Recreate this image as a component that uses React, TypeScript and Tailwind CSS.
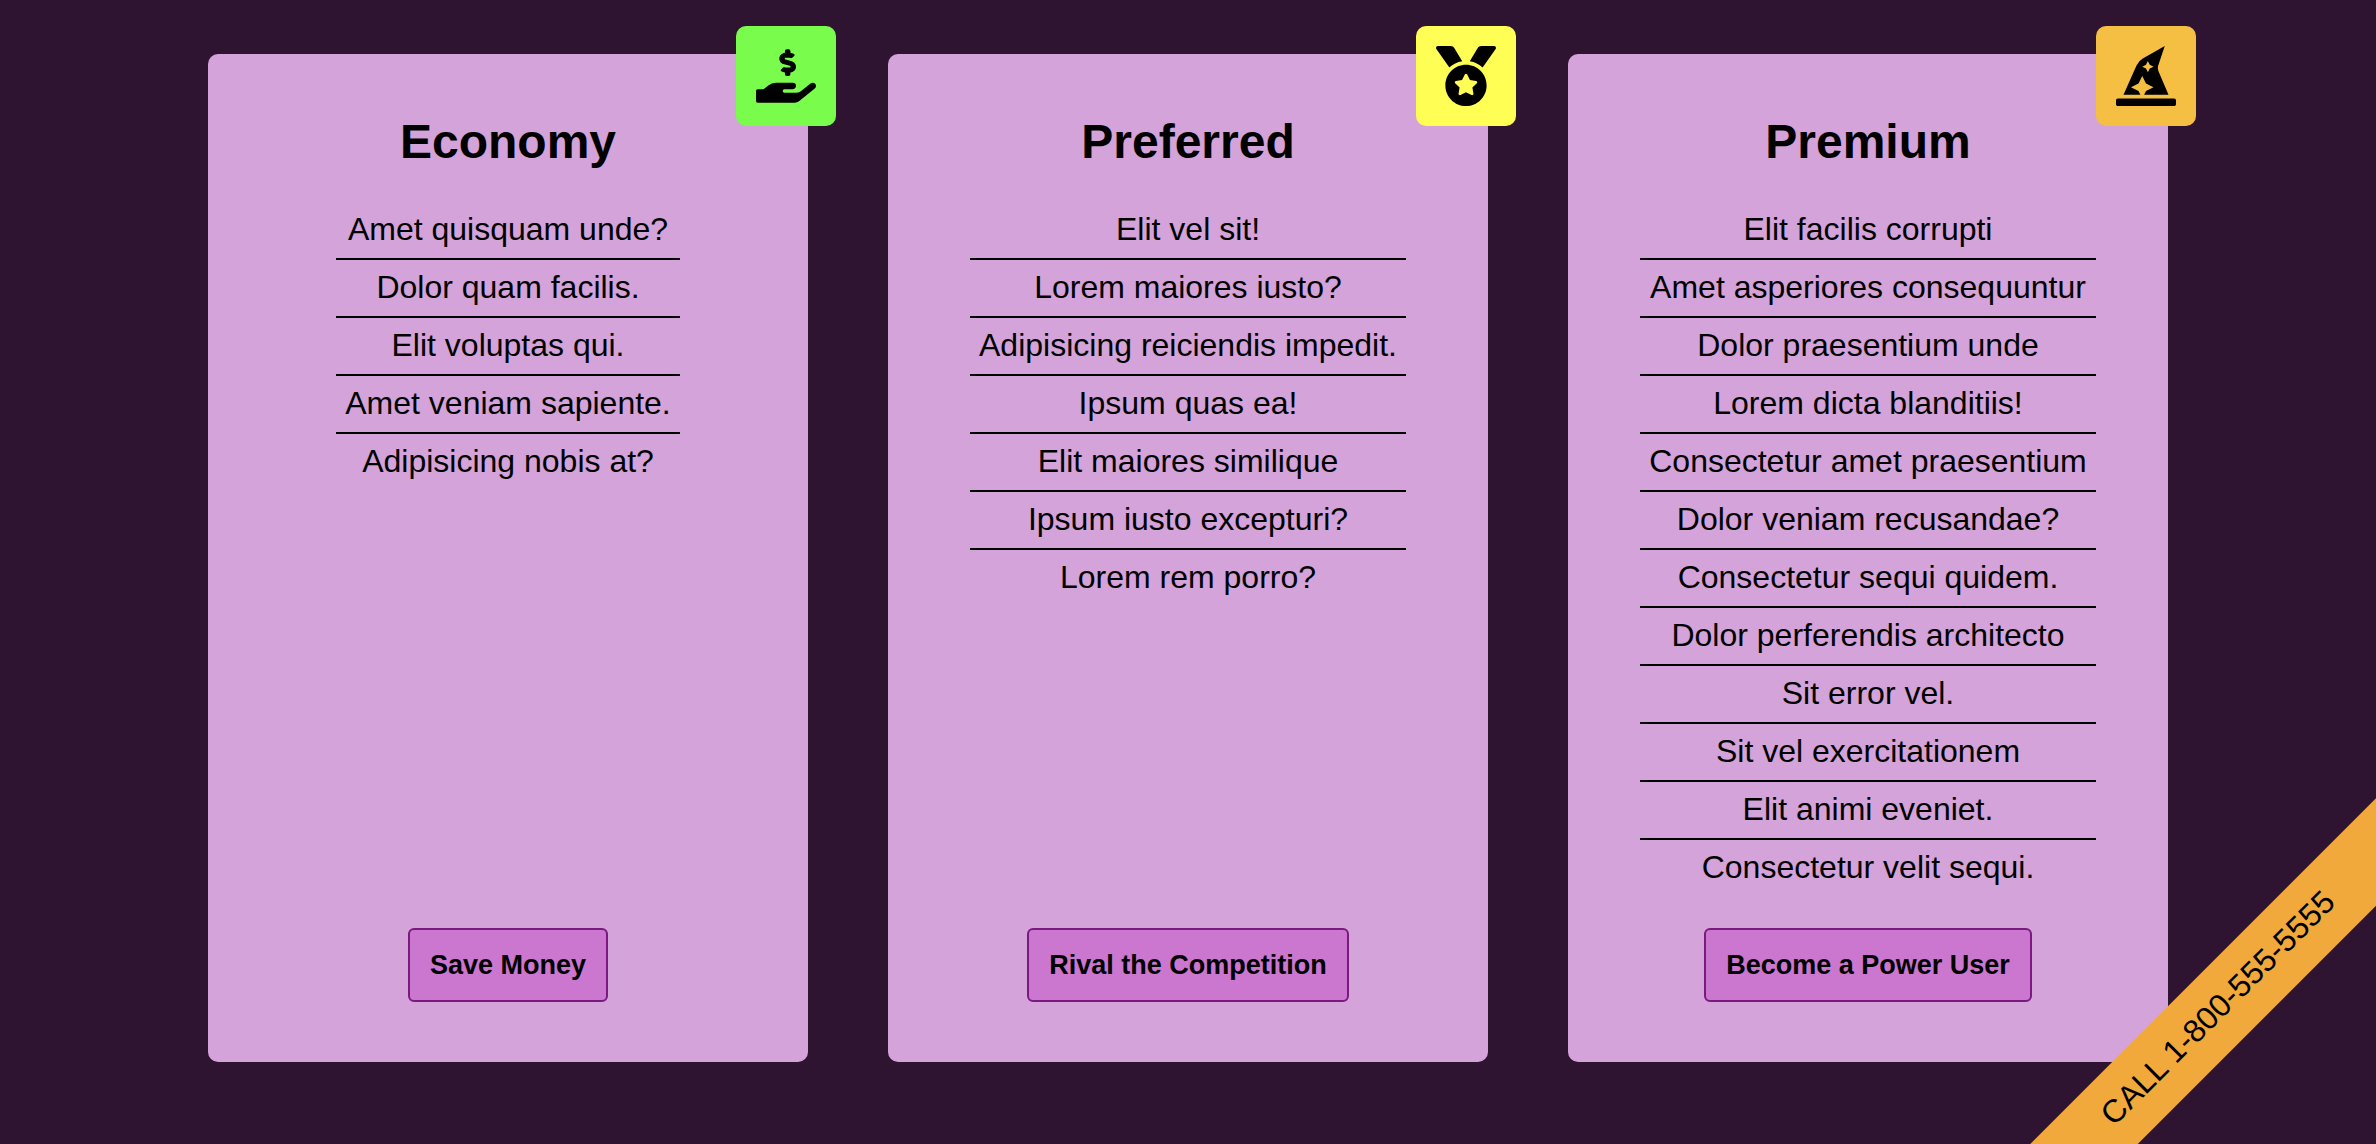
import type { ReactNode } from 'react'
import { FaHandHoldingUsd, FaHatWizard, FaMedal } from 'react-icons/fa'

type Plan = {
  name: string
  badgeColor: string
  icon: ReactNode
  features: string[]
  cta: string
}

const plans: Plan[] = [
  {
    name: 'Economy',
    badgeColor: 'bg-[#79fc4b]',
    icon: <FaHandHoldingUsd />,
    features: [
      'Amet quisquam unde?',
      'Dolor quam facilis.',
      'Elit voluptas qui.',
      'Amet veniam sapiente.',
      'Adipisicing nobis at?',
    ],
    cta: 'Save Money',
  },
  {
    name: 'Preferred',
    badgeColor: 'bg-[#fffe54]',
    icon: <FaMedal />,
    features: [
      'Elit vel sit!',
      'Lorem maiores iusto?',
      'Adipisicing reiciendis impedit.',
      'Ipsum quas ea!',
      'Elit maiores similique',
      'Ipsum iusto excepturi?',
      'Lorem rem porro?',
    ],
    cta: 'Rival the Competition',
  },
  {
    name: 'Premium',
    badgeColor: 'bg-[#f4bf42]',
    icon: <FaHatWizard />,
    features: [
      'Elit facilis corrupti',
      'Amet asperiores consequuntur',
      'Dolor praesentium unde',
      'Lorem dicta blanditiis!',
      'Consectetur amet praesentium',
      'Dolor veniam recusandae?',
      'Consectetur sequi quidem.',
      'Dolor perferendis architecto',
      'Sit error vel.',
      'Sit vel exercitationem',
      'Elit animi eveniet.',
      'Consectetur velit sequi.',
    ],
    cta: 'Become a Power User',
  },
]

function PlanCard({ plan }: { plan: Plan }) {
  return (
    <section className="relative flex max-w-[600px] flex-1 flex-col items-center gap-8 rounded-[10px] bg-[#d4a3d9] px-5 py-[60px]">
      <div
        className={`absolute -top-7 -right-7 flex size-[100px] items-center justify-center rounded-[10px] text-[60px] ${plan.badgeColor}`}
      >
        {plan.icon}
      </div>
      <h2 className="text-5xl leading-14 font-bold">{plan.name}</h2>
      <ul className="text-center text-[32px] leading-9">
        {plan.features.map((feature) => (
          <li
            key={feature}
            className="border-b-2 border-black px-[9px] pt-[9px] pb-[11px] last:border-b-0"
          >
            {feature}
          </li>
        ))}
      </ul>
      <button
        type="button"
        className="mt-auto cursor-pointer rounded-md border-2 border-[#7a1a80] bg-[#cb76cf] p-5 text-[27px] leading-[30px] font-bold"
      >
        {plan.cta}
      </button>
    </section>
  )
}

export default function App() {
  return (
    <div className="relative min-h-screen overflow-hidden bg-[#2e1430] font-['Liberation_Sans',Arial,sans-serif] text-black">
      <main className="flex justify-center gap-20 px-10 pt-[54px] pb-20">
        {plans.map((plan) => (
          <PlanCard key={plan.name} plan={plan} />
        ))}
      </main>
      <aside className="absolute right-[-143px] bottom-[97px] w-[600px] -rotate-45 bg-[#f2a93b] px-5 pt-[18px] pb-[22px] text-center text-[32px] leading-9">
        CALL 1-800-555-5555
      </aside>
    </div>
  )
}
